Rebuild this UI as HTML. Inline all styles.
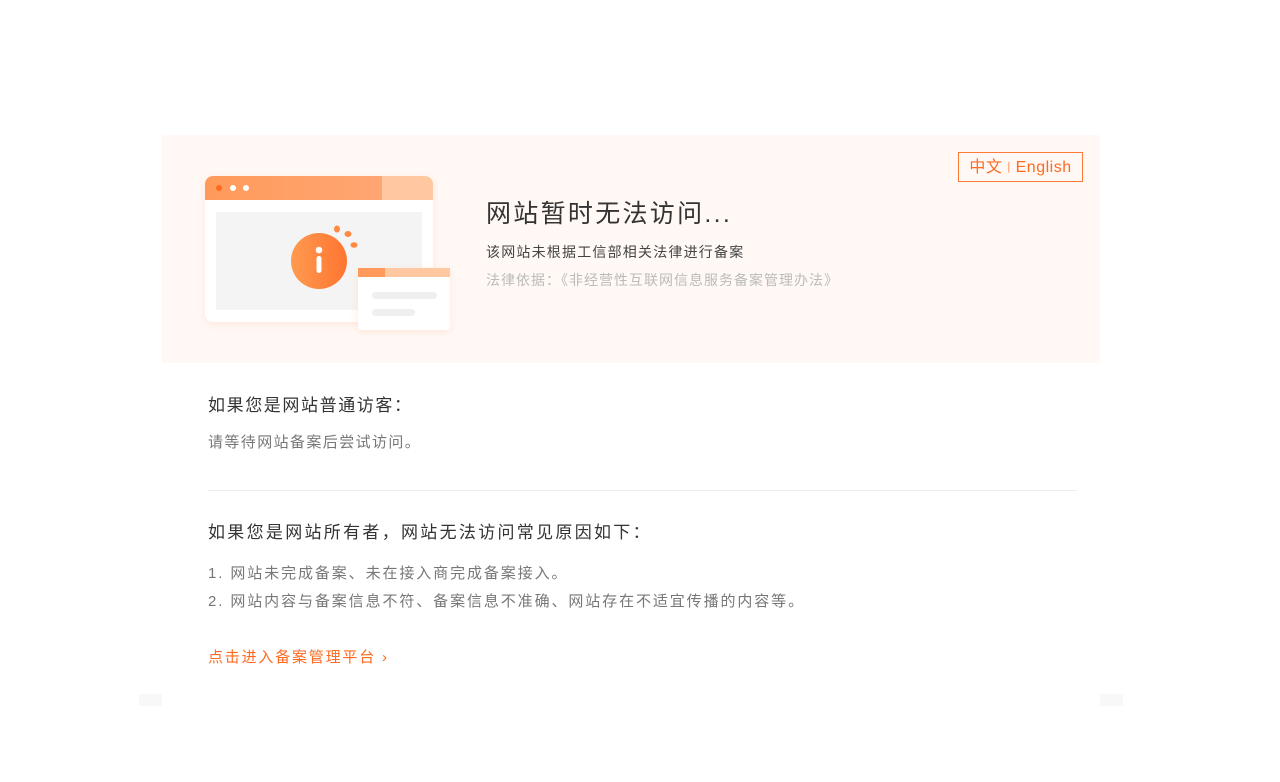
<!DOCTYPE html>
<html><head><meta charset="utf-8"><style>
body{margin:0;background:#fff;font-family:"Liberation Sans","Noto Sans CJK SC",sans-serif;width:1280px;height:782px;position:relative;overflow:hidden}
.a{position:absolute;white-space:nowrap}
</style></head><body>
<div class="a" style="left:162px;top:135px;width:938px;height:228px;background:#fff8f5"></div>
<div class="a" style="left:139px;top:694px;width:23px;height:12px;background:#f8f8f8"></div>
<div class="a" style="left:1100px;top:694px;width:23px;height:12px;background:#f8f8f8"></div>
<svg class="a" style="left:190px;top:160px" width="280" height="190" viewBox="190 160 280 190">
<defs><linearGradient id="h" x1="0" x2="1"><stop offset="0" stop-color="#ff9a5a"/><stop offset="1" stop-color="#ffa673"/></linearGradient>
<linearGradient id="c" x1="0" x2="1"><stop offset="0" stop-color="#ff9a50"/><stop offset="1" stop-color="#ff7530"/></linearGradient>
<filter id="s"><feDropShadow dx="0" dy="2" stdDeviation="4" flood-color="#ffb08a" flood-opacity=".25"/></filter></defs>
<rect x="205" y="176" width="228" height="146" rx="8" fill="#fff" filter="url(#s)"/>
<path d="M213 176h169v24h-177v-16a8 8 0 0 1 8-8z" fill="url(#h)"/>
<path d="M382 176h43a8 8 0 0 1 8 8v16h-51z" fill="#ffc8a0"/>
<circle cx="219" cy="188" r="3" fill="#ff6a20"/><circle cx="233" cy="188" r="3" fill="#fff"/><circle cx="246" cy="188" r="3" fill="#fff"/>
<rect x="216" y="212" width="206" height="98" fill="#f4f4f4"/>
<circle cx="319" cy="261" r="28" fill="url(#c)"/>
<circle cx="319" cy="250" r="3.3" fill="#fff"/><rect x="316.5" y="256" width="5" height="17" rx="2.5" fill="#fff"/>
<ellipse cx="337" cy="229" rx="3" ry="3.5" fill="#ff8a40"/><ellipse cx="348" cy="234" rx="3.5" ry="3" fill="#ff8a40"/><ellipse cx="354" cy="245" rx="3.5" ry="2.8" fill="#ff8a40"/>
<rect x="358" y="268" width="92" height="62" rx="3" fill="#fff" filter="url(#s)"/>
<rect x="358" y="268" width="27" height="9" fill="#ff9a5a"/><rect x="385" y="268" width="65" height="9" fill="#ffc8a0"/>
<rect x="372" y="292" width="65" height="7" rx="3.5" fill="#efefef"/><rect x="372" y="309" width="43" height="7" rx="3.5" fill="#efefef"/>
</svg>
<div class="a" style="left:958px;top:152px;width:123px;height:28px;border:1px solid #ff7a35;color:#ff6a20;font-size:16px;line-height:28px;text-align:center;letter-spacing:0.5px">中文 <span style="font-size:11px;color:#ff8a50;vertical-align:2px">|</span> English</div>
<div class="a" style="left:486px;top:197px;font-size:25px;color:#333;line-height:34px;letter-spacing:2.3px">网站暂时无法访问...</div>
<div class="a" style="left:486px;top:242px;font-size:14px;color:#444;line-height:20px;letter-spacing:1.2px">该网站未根据工信部相关法律进行备案</div>
<div class="a" style="left:486px;top:270px;font-size:14px;color:#bbb;line-height:20px;letter-spacing:1px">法律依据：《非经营性互联网信息服务备案管理办法》</div>
<div class="a" style="left:208px;top:394px;font-size:17px;color:#333;line-height:24px;letter-spacing:1.6px">如果您是网站普通访客：</div>
<div class="a" style="left:208px;top:432px;font-size:15px;color:#777;line-height:22px;letter-spacing:1.4px">请等待网站备案后尝试访问。</div>
<div class="a" style="left:208px;top:490px;width:869px;height:1px;background:#ececec"></div>
<div class="a" style="left:208px;top:521px;font-size:17px;color:#333;line-height:24px;letter-spacing:2.3px">如果您是网站所有者，网站无法访问常见原因如下：</div>
<div class="a" style="left:208px;top:560px;font-size:15px;color:#777;line-height:28px;letter-spacing:1.9px">1. 网站未完成备案、未在接入商完成备案接入。<br>2. 网站内容与备案信息不符、备案信息不准确、网站存在不适宜传播的内容等。</div>
<div class="a" style="left:208px;top:647px;font-size:15px;color:#ff6a20;line-height:22px;letter-spacing:1.8px">点击进入备案管理平台 ›</div>
</body></html>
